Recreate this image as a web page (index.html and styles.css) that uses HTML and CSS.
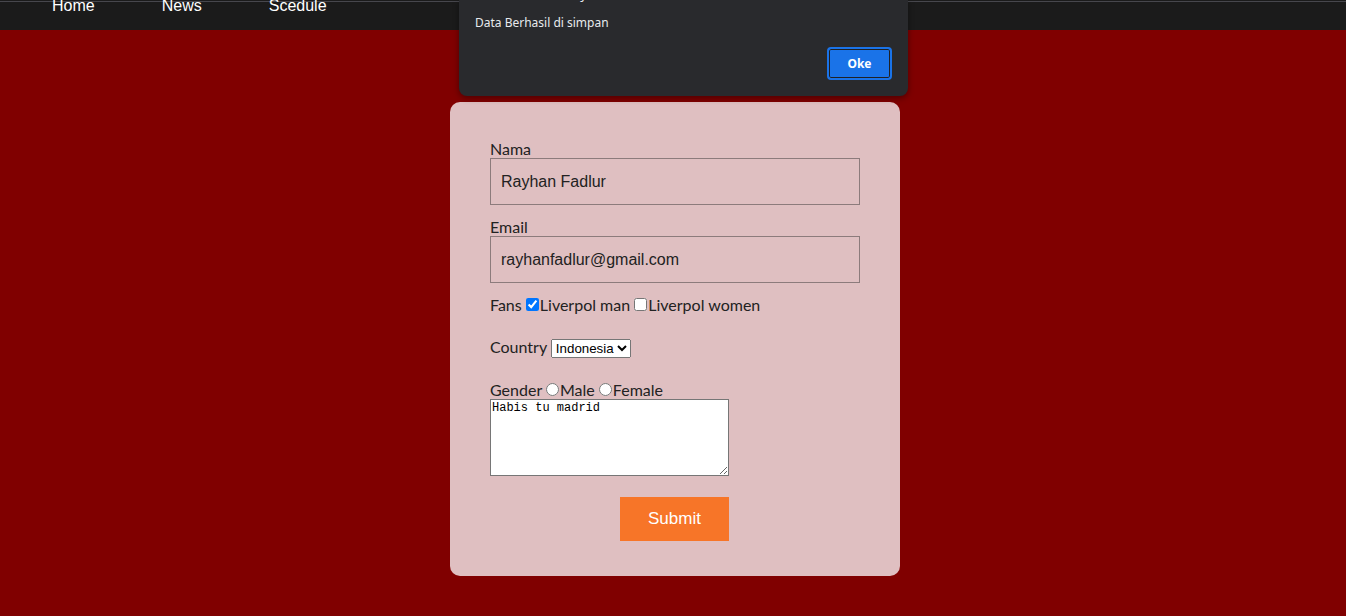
FILE: index.html
```html
<!DOCTYPE html>
<html lang="id">
<head>
<meta charset="utf-8">
<title>Form</title>
<link rel="stylesheet" href="styles.css">
</head>
<body>
<nav class="nav">
  <a class="nav-link" href="#">Home</a>
  <a class="nav-link" href="#">News</a>
  <a class="nav-link" href="#">Scedule</a>
</nav>

<main class="page">
  <form class="card">
    <div class="field">
      <label class="label" for="nama">Nama</label>
      <input class="text-input" id="nama" type="text" value="Rayhan Fadlur">
    </div>
    <div class="field">
      <label class="label" for="email">Email</label>
      <input class="text-input" id="email" type="text" value="rayhanfadlur@gmail.com">
    </div>
    <div class="line fans">Fans <input class="check" type="checkbox" checked>Liverpol man <input class="check" type="checkbox">Liverpol women</div>
    <div class="line country">Country <select class="select"><option>Indonesia</option></select></div>
    <div class="line gender">Gender <input class="radio" type="radio" name="g">Male <input class="radio" type="radio" name="g">Female</div>
    <textarea class="area" spellcheck="false">Habis tu madrid</textarea>
    <div class="actions"><button class="submit" type="button">Submit</button></div>
  </form>
</main>

<div class="dialog">
  <div class="dialog-title">127.0.0.1:5500 says</div>
  <div class="dialog-msg">Data Berhasil di simpan</div>
  <div class="dialog-actions"><button class="oke" type="button">Oke</button></div>
</div>
</body>
</html>
```

FILE: styles.css
```css
html, body {
  margin: 0;
  padding: 0;
}
body {
  background: #800000;
  font-family: "Liberation Sans", Arial, sans-serif;
  min-height: 616px;
  overflow: hidden;
}
.nav {
  height: 30px;
  background: linear-gradient(#1b1b1b 0 1px, #47474d 1px 2px, #1b1b1b 2px);
  display: flex;
  gap: 67px;
  padding-left: 52px;
  box-sizing: border-box;
}
.nav-link {
  color: #fff;
  text-decoration: none;
  font-size: 16px;
  line-height: 12px;
}
.page {
  display: flex;
  justify-content: center;
  padding-top: 72px;
  padding-left: 4px;
}
.card {
  width: 450px;
  box-sizing: border-box;
  background: #dfbfc1;
  border-radius: 10px;
  padding: 37px 40px 35px;
  font-family: Lato, "Open Sans", sans-serif;
  font-size: 16px;
  color: #222;
}
.field {
  margin-bottom: 12px;
}
.label {
  display: block;
  line-height: 19px;
}
.text-input {
  display: block;
  width: 100%;
  height: 47px;
  box-sizing: border-box;
  border: 1px solid #8c7b7c;
  background: transparent;
  padding: 0 10px;
  font-family: "Liberation Sans", Arial, sans-serif;
  font-size: 16px;
  color: #222;
  outline: none;
}
.line {
  line-height: 19px;
}
.check {
  margin: 3px 1px 3px 0;
}
.radio {
  margin: 3px 1px 0 0;
}
.fans {
  margin-bottom: 23px;
}
.country {
  margin-bottom: 22px;
}
.select {
  font-family: "Liberation Sans", Arial, sans-serif;
  font-size: 13.33px;
}
.area {
  display: block;
  width: 239px;
  height: 77px;
  box-sizing: border-box;
  margin: 0;
  padding: 1px;
  font-family: "Liberation Mono", monospace;
  font-size: 12px;
  border: 1px solid #767676;
  resize: both;
  background: #fff;
}
.actions {
  display: flex;
  justify-content: center;
  margin-top: 21px;
  padding-right: 1px;
}
.submit {
  width: 109px;
  height: 44px;
  border: none;
  background: #f77528;
  color: #fff;
  font-family: "Liberation Sans", Arial, sans-serif;
  font-size: 17px;
}
.dialog {
  position: absolute;
  top: 0;
  left: 459px;
  width: 449px;
  height: 96px;
  box-sizing: border-box;
  background: #292a2d;
  border-radius: 0 0 8px 8px;
  box-shadow: 0 2px 6px rgba(0,0,0,0.4);
  padding: 0 16px 16px;
  font-family: "Noto Sans", "Open Sans", sans-serif;
  font-size: 12px;
  color: #e8eaed;
  overflow: hidden;
  display: flex;
  flex-direction: column;
}
.dialog-title {
  margin-top: -14px;
  line-height: 16px;
  font-size: 13px;
}
.dialog-msg {
  margin-top: 13px;
  line-height: 16px;
}
.dialog-actions {
  margin-top: auto;
  display: flex;
  justify-content: flex-end;
}
.oke {
  width: 65px;
  height: 33px;
  box-sizing: border-box;
  border-radius: 4px;
  border: 2px solid #1a73e8;
  box-shadow: inset 0 0 0 1px #202124;
  background: #1a73e8;
  color: #fff;
  font-family: "Noto Sans", "Open Sans", sans-serif;
  font-weight: 700;
  font-size: 12px;
}
```
